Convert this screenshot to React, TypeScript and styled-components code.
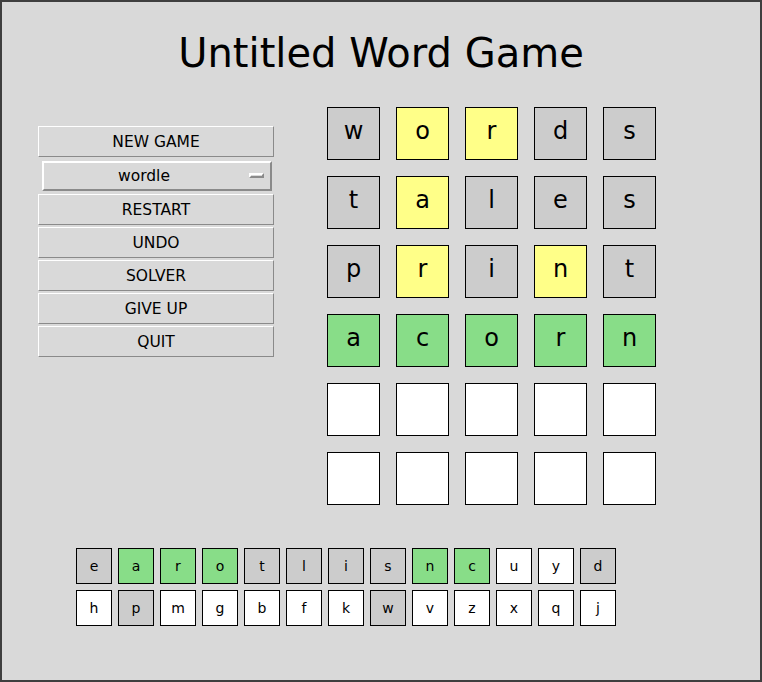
import styled, { createGlobalStyle } from "styled-components";

type Mark = "gray" | "yellow" | "green" | "empty";

const GlobalStyle = createGlobalStyle`
  body {
    margin: 0;
    font-family: "DejaVu Sans", "Liberation Sans", sans-serif;
    color: #000;
  }
`;

const colors: Record<Mark, string> = {
  gray: "#cccccc",
  yellow: "#ffff88",
  green: "#88dd88",
  empty: "#ffffff",
};

const board: [string, Mark][][] = [
  [["w", "gray"], ["o", "yellow"], ["r", "yellow"], ["d", "gray"], ["s", "gray"]],
  [["t", "gray"], ["a", "yellow"], ["l", "gray"], ["e", "gray"], ["s", "gray"]],
  [["p", "gray"], ["r", "yellow"], ["i", "gray"], ["n", "yellow"], ["t", "gray"]],
  [["a", "green"], ["c", "green"], ["o", "green"], ["r", "green"], ["n", "green"]],
  [["", "empty"], ["", "empty"], ["", "empty"], ["", "empty"], ["", "empty"]],
  [["", "empty"], ["", "empty"], ["", "empty"], ["", "empty"], ["", "empty"]],
];

const keys: [string, Mark][][] = [
  [
    ["e", "gray"], ["a", "green"], ["r", "green"], ["o", "green"], ["t", "gray"],
    ["l", "gray"], ["i", "gray"], ["s", "gray"], ["n", "green"], ["c", "green"],
    ["u", "empty"], ["y", "empty"], ["d", "gray"],
  ],
  [
    ["h", "empty"], ["p", "gray"], ["m", "empty"], ["g", "empty"], ["b", "empty"],
    ["f", "empty"], ["k", "empty"], ["w", "gray"], ["v", "empty"], ["z", "empty"],
    ["x", "empty"], ["q", "empty"], ["j", "empty"],
  ],
];

export default function App() {
  return (
    <>
      <GlobalStyle />
      <Window>
        <Title>Untitled Word Game</Title>
        <Main>
          <Sidebar>
            <Button>NEW GAME</Button>
            <MenuButton>
              <span>wordle</span>
              <Indicator />
            </MenuButton>
            <Button>RESTART</Button>
            <Button>UNDO</Button>
            <Button>SOLVER</Button>
            <Button>GIVE UP</Button>
            <Button>QUIT</Button>
          </Sidebar>
          <Board>
            {board.flat().map(([ch, mark], i) => (
              <Tile key={i} mark={mark}>
                {ch}
              </Tile>
            ))}
          </Board>
        </Main>
        <Keyboard>
          {keys.map((row, r) => (
            <KeyRow key={r}>
              {row.map(([ch, mark]) => (
                <Key key={ch} mark={mark}>
                  {ch}
                </Key>
              ))}
            </KeyRow>
          ))}
        </Keyboard>
      </Window>
    </>
  );
}

const Window = styled.div`
  width: 762px;
  height: 682px;
  box-sizing: border-box;
  border: 2px solid #3f3f3f;
  background: #d9d9d9;
  padding-top: 27px;
`;

const Title = styled.h1`
  margin: 0;
  font-size: 40px;
  font-weight: normal;
  line-height: 48px;
  text-align: center;
`;

const Main = styled.div`
  display: flex;
  align-items: flex-start;
  gap: 53px;
  padding: 30px 0 0 36px;
`;

const Sidebar = styled.div`
  width: 236px;
  margin-top: 19px;
  display: flex;
  flex-direction: column;
  gap: 2px;
`;

const Button = styled.div`
  height: 31px;
  box-sizing: border-box;
  border: 1px solid;
  border-color: #ffffff #8a8a8a #8a8a8a #ffffff;
  display: flex;
  align-items: center;
  justify-content: center;
  font-size: 15.5px;
`;

const MenuButton = styled.div`
  position: relative;
  height: 30px;
  margin: 2px 2px 1px 4px;
  box-sizing: border-box;
  border: 2px solid;
  border-color: #ffffff #8a8a8a #8a8a8a #ffffff;
  display: flex;
  align-items: center;
  justify-content: center;
  padding-right: 26px;
  font-size: 15.5px;
`;

const Indicator = styled.span`
  position: absolute;
  right: 6px;
  top: 10px;
  width: 15px;
  height: 5px;
  box-sizing: border-box;
  border: 2px solid;
  border-color: #ffffff #8a8a8a #8a8a8a #ffffff;
`;

const Board = styled.div`
  display: grid;
  grid-template-columns: repeat(5, 53px);
  grid-auto-rows: 53px;
  gap: 16px;
`;

const Tile = styled.div<{ mark: Mark }>`
  box-sizing: border-box;
  border: 1px solid #000;
  background: ${(p) => colors[p.mark]};
  display: flex;
  align-items: center;
  justify-content: center;
  font-size: 24px;
  padding-bottom: 6px;
`;

const Keyboard = styled.div`
  display: flex;
  flex-direction: column;
  gap: 6px;
  padding: 43px 0 0 74px;
`;

const KeyRow = styled.div`
  display: flex;
  gap: 6px;
`;

const Key = styled.div<{ mark: Mark }>`
  width: 36px;
  height: 36px;
  box-sizing: border-box;
  border: 1px solid #000;
  background: ${(p) => colors[p.mark]};
  display: flex;
  align-items: center;
  justify-content: center;
  font-size: 14px;
`;
